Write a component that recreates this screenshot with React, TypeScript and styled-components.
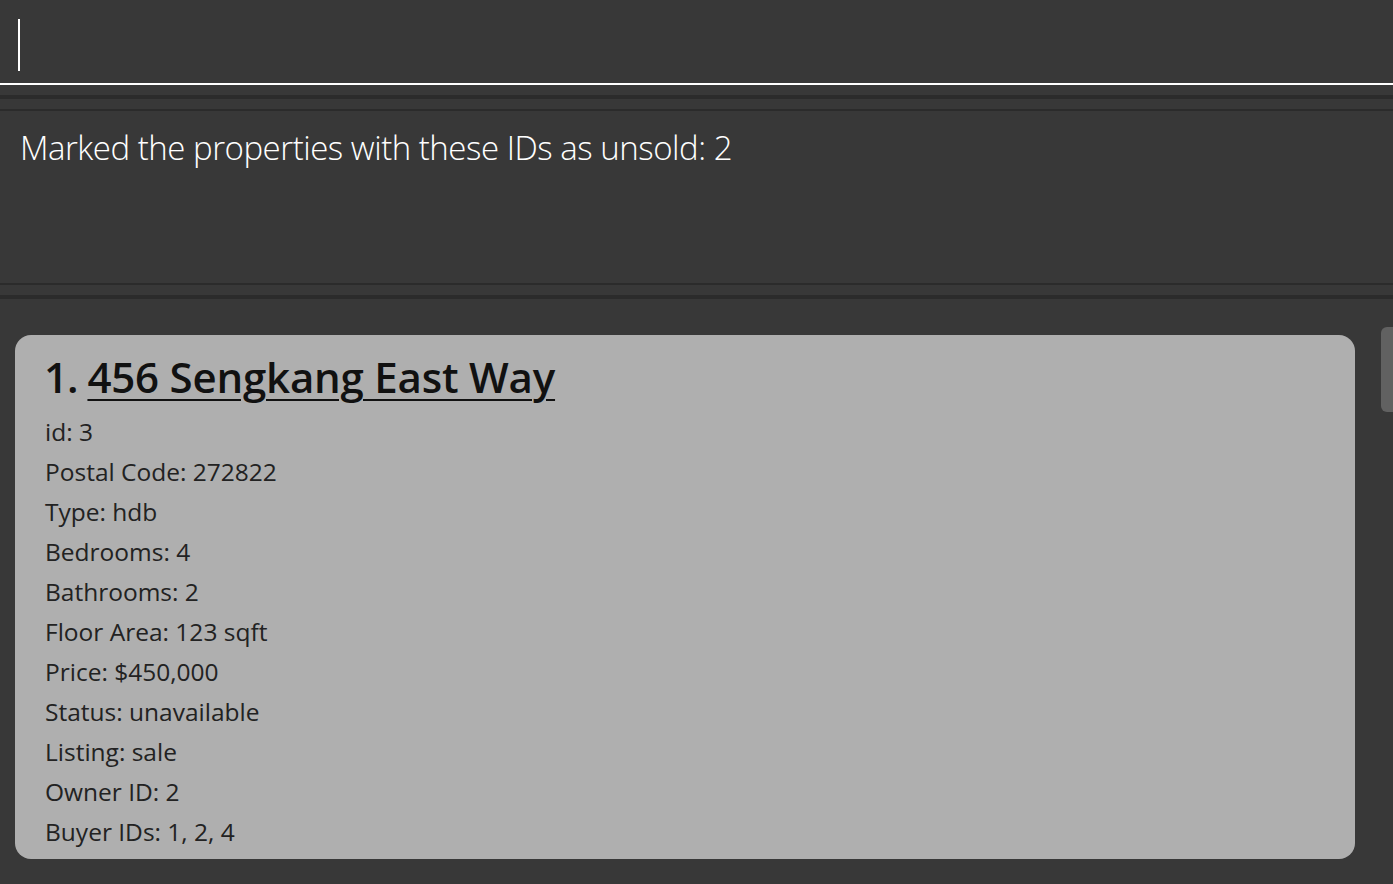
import React from "react";
import styled, { createGlobalStyle } from "styled-components";

const GlobalStyle = createGlobalStyle`
  html, body {
    margin: 0;
    padding: 0;
    background: #383838;
    overflow: hidden;
  }
  body {
    font-family: "Open Sans", "Noto Sans", sans-serif;
  }
`;

const Page = styled.div`
  width: 1393px;
  height: 884px;
  background: #383838;
  display: flex;
  flex-direction: column;
`;

const CommandBox = styled.div`
  height: 85px;
  border-bottom: 2px solid #ffffff;
  display: flex;
  align-items: flex-start;
  padding: 19px 0 0 18px;
  box-sizing: border-box;
`;

const Caret = styled.span`
  display: block;
  width: 2px;
  height: 52px;
  background: #ffffff;
`;

const Divider = styled.div<{ $thick: number }>`
  height: ${(p) => p.$thick}px;
  background: #2b2b2b;
`;

const Spacer = styled.div<{ $h: number }>`
  height: ${(p) => p.$h}px;
`;

const ResultDisplay = styled.div`
  height: 172px;
  padding: 15px 0 0 20px;
  box-sizing: border-box;
  color: #ffffff;
  font-family: "Open Sans", sans-serif;
  font-weight: 300;
  font-size: 33px;
  letter-spacing: -0.48px;
  line-height: 44px;
`;

const ListArea = styled.div`
  flex: 1;
  position: relative;
  padding: 36px 38px 0 15px;
`;

const Card = styled.div`
  background: #afafaf;
  border-radius: 16px;
  padding: 14px 30px 7px 29px;
  display: flex;
  flex-direction: column;
  color: #222222;
`;

const Title = styled.div`
  font-family: "Open Sans", sans-serif;
  font-weight: 600;
  font-size: 42px;
  letter-spacing: -0.2px;
  line-height: 56px;
  color: #111111;
  margin-bottom: 7px;
`;

const Index = styled.span`
  letter-spacing: -1px;
`;

const Address = styled.span`
  text-decoration: underline;
  text-decoration-thickness: 2px;
  text-underline-offset: 6px;
`;

const Field = styled.div`
  font-family: "Open Sans", sans-serif;
  font-weight: 400;
  font-size: 24.5px;
  letter-spacing: 0px;
  line-height: 40px;
  color: #222222;
  padding-left: 1px;
`;

const ScrollThumb = styled.div`
  position: absolute;
  right: 0;
  top: 28px;
  width: 12px;
  height: 85px;
  background: #616161;
  border-radius: 6px 0 0 6px;
`;

const fields = [
  "id: 3",
  "Postal Code: 272822",
  "Type: hdb",
  "Bedrooms: 4",
  "Bathrooms: 2",
  "Floor Area: 123 sqft",
  "Price: $450,000",
  "Status: unavailable",
  "Listing: sale",
  "Owner ID: 2",
  "Buyer IDs: 1, 2, 4",
];

export default function App() {
  return (
    <>
      <GlobalStyle />
      <Page>
        <CommandBox>
          <Caret />
        </CommandBox>
        <Spacer $h={10} />
        <Divider $thick={4} />
        <Spacer $h={10} />
        <Divider $thick={2} />
        <ResultDisplay>Marked the properties with these IDs as unsold: 2</ResultDisplay>
        <Divider $thick={2} />
        <Spacer $h={10} />
        <Divider $thick={4} />
        <ListArea>
          <Card>
            <Title>
              <Index>1. </Index>
              <Address>456 Sengkang East Way</Address>
            </Title>
            {fields.map((f) => (
              <Field key={f}>{f}</Field>
            ))}
          </Card>
          <ScrollThumb />
        </ListArea>
      </Page>
    </>
  );
}
